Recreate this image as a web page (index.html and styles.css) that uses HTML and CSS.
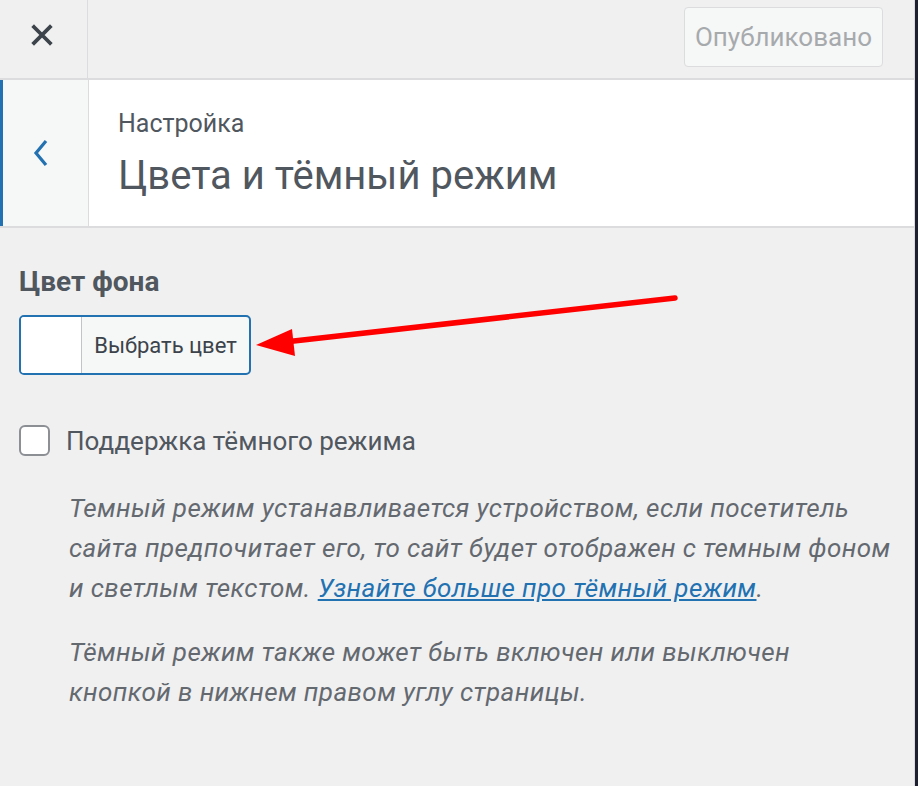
FILE: index.html
```html
<!DOCTYPE html>
<html lang="ru">
  <head>
    <meta charset="UTF-8" />
    <meta name="viewport" content="width=device-width, initial-scale=1.0" />
    <title>Цвета и тёмный режим</title>
    <link rel="stylesheet" href="styles.css">
  </head>
  <body>
    <div class="app">
      <div class="panel">
        <div class="topbar">
          <button class="close" aria-label="Закрыть">
            <svg width="22" height="22" viewBox="0 0 22 22">
              <path d="M3 3 L19 19 M19 3 L3 19" stroke="#3c434a" stroke-width="3.8" stroke-linecap="square" fill="none" />
            </svg>
          </button>
          <div class="spacer"></div>
          <button class="publish" disabled>Опубликовано</button>
        </div>

        <div class="section-head">
          <button class="back" aria-label="Назад">
            <svg width="16" height="28" viewBox="0 0 16 28">
              <path d="M13 2 L3 14 L13 26" stroke="#2271b1" stroke-width="3.2" fill="none" />
            </svg>
          </button>
          <div class="titles">
            <span class="subtitle">Настройка</span>
            <h1>Цвета и тёмный режим</h1>
          </div>
        </div>

        <div class="controls">
          <h2>Цвет фона</h2>
          <button class="color-picker">
            <span class="swatch"></span>
            <span class="pick-label">Выбрать цвет</span>
          </button>

          <label class="check">
            <input type="checkbox" />
            <span>Поддержка тёмного режима</span>
          </label>

          <div class="description">
            <p>
              Темный режим устанавливается устройством, если посетитель<br>
              сайта предпочитает его, то сайт будет отображен с темным фоном<br>
              и светлым текстом. <a href="#">Узнайте больше про тёмный режим</a>.
            </p>
            <p>
              Тёмный режим также может быть включен или выключен<br>
              кнопкой в нижнем правом углу страницы.
            </p>
          </div>
        </div>

        <svg class="arrow" width="914" height="786" viewBox="0 0 914 786">
          <line x1="675" y1="298" x2="285" y2="342" stroke="#ff0000" stroke-width="5.5" stroke-linecap="round" />
          <polygon points="256,345 292,329 295,356" fill="#ff0000" />
        </svg>
      </div>
      <div class="edge"></div>
    </div>
  </body>
</html>
```

FILE: styles.css
```css
body {
  margin: 0;
  font-family: Roboto, "Noto Sans", sans-serif;
  background-color: #f0f0f1;
  color: #50575e;
}
.app {
  display: flex;
  height: 786px;
  overflow: hidden;
}
.panel {
  position: relative;
  flex: 1;
  border-right: 1px solid #dcdcde;
  background-color: #f0f0f1;
}
.edge {
  width: 3px;
  background-color: #1d2031;
}
button {
  font-family: inherit;
}

/* top bar */
.topbar {
  display: flex;
  height: 78px;
  border-bottom: 2px solid #dcdcde;
}
.close {
  width: 88px;
  border: none;
  border-right: 1px solid #dcdcde;
  background: none;
  display: flex;
  align-items: center;
  justify-content: center;
  padding: 0 4px 8px 0;
}
.spacer {
  flex: 1;
}
.publish {
  margin: 7px 31px 0 0;
  height: 60px;
  width: 199px;
  border: 1px solid #dcdcde;
  border-radius: 4px;
  background-color: #f6f7f7;
  color: #a7aaad;
  font-size: 26px;
  padding: 0;
}

/* section heading */
.section-head {
  display: flex;
  height: 146px;
  background-color: #fff;
  border-bottom: 2px solid #dcdcde;
}
.back {
  width: 89px;
  border: none;
  border-left: 3px solid #2271b1;
  border-right: 1px solid #dcdcde;
  background-color: #f6f7f7;
  display: flex;
  align-items: center;
  justify-content: center;
  padding: 0 10px 0 0;
}
.titles {
  display: flex;
  flex-direction: column;
  justify-content: center;
  gap: 15px;
  padding: 3px 0 0 29px;
}
.subtitle {
  font-size: 25px;
  line-height: 28px;
}
h1 {
  margin: 0;
  font-size: 40px;
  line-height: 46px;
  font-weight: 400;
}

/* controls */
.controls {
  padding: 38px 19px 0;
}
h2 {
  margin: 0 0 17px;
  font-size: 28px;
  line-height: 32px;
  font-weight: 700;
}
.color-picker {
  display: flex;
  width: 232px;
  height: 60px;
  padding: 0;
  border: 2px solid #2271b1;
  border-radius: 5px;
  overflow: hidden;
  background-color: #f6f7f7;
  color: #3c434a;
  font-size: 22px;
}
.swatch {
  width: 60px;
  height: 100%;
  background-color: #fff;
  border-right: 1.5px solid #c3c4c7;
}
.pick-label {
  flex: 1;
  align-self: center;
  text-align: center;
}
.check {
  display: flex;
  align-items: center;
  gap: 16px;
  margin-top: 50px;
  font-size: 26px;
}
.check input {
  appearance: none;
  margin: 0;
  width: 31px;
  height: 31px;
  border: 2px solid #8c8f94;
  border-radius: 6px;
  background-color: #fff;
}
.description {
  margin: 32px 0 0 50px;
  font-size: 26px;
  letter-spacing: 0.4px;
  line-height: 40px;
  font-style: italic;
  color: #646970;
}
.description p {
  margin: 0 0 24px;
}
.description a {
  color: #2271b1;
}

.arrow {
  position: absolute;
  left: 0;
  top: 0;
  pointer-events: none;
}
```
